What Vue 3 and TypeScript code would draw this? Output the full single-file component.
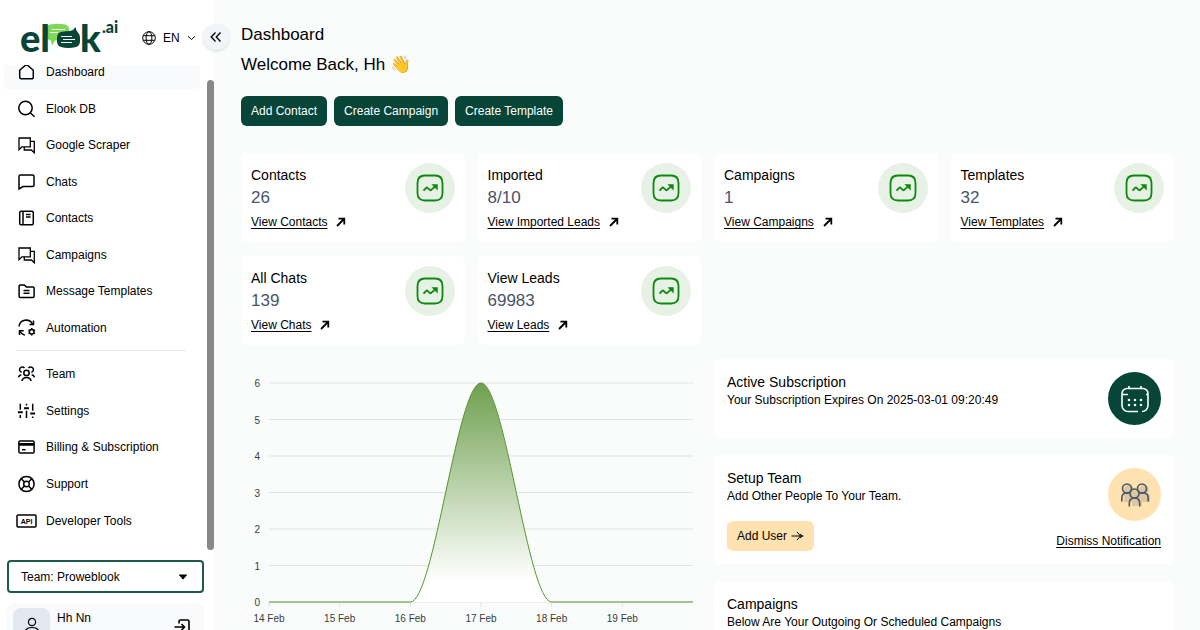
<script setup lang="ts">
interface NavItem {
  label: string
  icon: string
  active?: boolean
}

interface Stat {
  label: string
  value: string
  link: string
}

const icons: Record<string, string[]> = {
  home: ['M2.7 8.3 8.2 3.5a2 2 0 0 1 2.6 0l5.5 4.8v7a1.5 1.5 0 0 1-1.5 1.5H4.2a1.5 1.5 0 0 1-1.5-1.5z'],
  search: ['M15.2 9A6.7 6.7 0 1 1 1.8 9a6.7 6.7 0 0 1 13.4 0z', 'M13.2 13.8l4.3 4'],
  forum: ['M2 14.6V3h11.3v8.8H4.9z', 'M13.3 6.3h4v11.5l-2.9-2.8H7.3v-3.2'],
  chat: ['M2 17V4.5A1.5 1.5 0 0 1 3.5 3h12A1.5 1.5 0 0 1 17 4.5V13a1.5 1.5 0 0 1-1.5 1.5H6z'],
  book: [
    'M4.2 3.2h10.6a1.5 1.5 0 0 1 1.5 1.5v10.6a1.5 1.5 0 0 1-1.5 1.5H4.2a1.5 1.5 0 0 1-1.5-1.5V4.7a1.5 1.5 0 0 1 1.5-1.5z',
    'M6 3.2v13.6',
    'M9 6.4h4.6M9 9h4.6',
  ],
  folder: [
    'M3.3 4h4l2 1.9h6.6a1.2 1.2 0 0 1 1.2 1.2v8.2a1.2 1.2 0 0 1-1.2 1.2H3.3a1.2 1.2 0 0 1-1.2-1.2V5.2A1.2 1.2 0 0 1 3.3 4z',
    'M6.5 9.6h6M6.5 12.2h6',
  ],
  automation: [
    'M2 8.5A7.2 7.2 0 0 1 15.4 5.8',
    'M16.5 2.6v4h-4',
    'M7.8 17.2A7.5 7.5 0 0 1 3 13.2',
    'M2.5 17v-4.2h4.2',
    'M17 13.7a2.3 2.3 0 1 1-4.6 0 2.3 2.3 0 0 1 4.6 0z',
    'M14.7 10v1.4M14.7 16v1.4M11.5 11.9l1.2.7M16.7 14.9l1.2.7M11.5 15.5l1.2-.7M16.7 12.5l1.2-.7',
  ],
  team: [
    'M12.2 8.9a2.7 2.7 0 1 1-5.4 0 2.7 2.7 0 0 1 5.4 0z',
    'M4.8 17c.7-2.3 2.4-3.5 4.7-3.5s4 1.2 4.7 3.5',
    'M4.7 8.3A2.7 2.7 0 1 1 7.5 4.1M14.3 8.3a2.7 2.7 0 1 0-2.8-4.2',
    'M1.5 13.3c.3-1.4 1.3-2.3 2.8-2.6M17.5 13.3c-.3-1.4-1.3-2.3-2.8-2.6',
  ],
  sliders: [
    'M3.3 2.8v6M3.3 14v3M9.5 2.8v1.6M9.5 9.8V17M15.7 2.8v7M15.7 15.6V17',
    'M.9 11.2h4.8M7.1 7.2h4.8M13.3 12.6h4.8',
  ],
  card: [
    'M3.2 4h12.6a1.3 1.3 0 0 1 1.3 1.3v9.4a1.3 1.3 0 0 1-1.3 1.3H3.2a1.3 1.3 0 0 1-1.3-1.3V5.3A1.3 1.3 0 0 1 3.2 4z',
    'M2 6.8h15M2 8h15',
    'M5 12.7h3.5',
  ],
  support: [
    'M17.1 10a7.6 7.6 0 1 1-15.2 0 7.6 7.6 0 0 1 15.2 0z',
    'M12.3 10a2.8 2.8 0 1 1-5.6 0 2.8 2.8 0 0 1 5.6 0z',
    'M4.2 4.7l3.3 3.3M14.8 4.7L11.5 8M4.2 15.3L7.5 12M14.8 15.3L11.5 12',
  ],
  api: ['M1 4h17a1 1 0 0 1 1 1v10a1 1 0 0 1-1 1H1a1 1 0 0 1-1-1V5a1 1 0 0 1 1-1z'],
}

const groups: NavItem[][] = [
  [
    { label: 'Dashboard', icon: 'home', active: true },
    { label: 'Elook DB', icon: 'search' },
    { label: 'Google Scraper', icon: 'forum' },
    { label: 'Chats', icon: 'chat' },
    { label: 'Contacts', icon: 'book' },
    { label: 'Campaigns', icon: 'forum' },
    { label: 'Message Templates', icon: 'folder' },
    { label: 'Automation', icon: 'automation' },
  ],
  [
    { label: 'Team', icon: 'team' },
    { label: 'Settings', icon: 'sliders' },
    { label: 'Billing & Subscription', icon: 'card' },
    { label: 'Support', icon: 'support' },
    { label: 'Developer Tools', icon: 'api' },
  ],
]

const actions = ['Add Contact', 'Create Campaign', 'Create Template']

const stats: Stat[] = [
  { label: 'Contacts', value: '26', link: 'View Contacts' },
  { label: 'Imported', value: '8/10', link: 'View Imported Leads' },
  { label: 'Campaigns', value: '1', link: 'View Campaigns' },
  { label: 'Templates', value: '32', link: 'View Templates' },
  { label: 'All Chats', value: '139', link: 'View Chats' },
  { label: 'View Leads', value: '69983', link: 'View Leads' },
]

const days = ['14 Feb', '15 Feb', '16 Feb', '17 Feb', '18 Feb', '19 Feb']
const messages = [0, 0, 0, 6, 0, 0, 0]

const plot = { left: 28, right: 452, top: 24, bottom: 243 }
const maxValue = 6
const step = (plot.right - plot.left) / (messages.length - 1)
const px = (i: number) => plot.left + i * step
const py = (v: number) => plot.bottom - (v / maxValue) * (plot.bottom - plot.top)

const line = messages
  .map((v, i) => {
    if (i === 0) return `M${px(0)} ${py(v)}`
    const third = step / 3
    return `C${px(i - 1) + third} ${py(messages[i - 1])} ${px(i) - third} ${py(v)} ${px(i)} ${py(v)}`
  })
  .join(' ')
const area = `${line} V${plot.bottom} H${plot.left} Z`
const ticks = [0, 1, 2, 3, 4, 5, 6]
</script>

<template>
  <div class="app">
    <aside class="sidebar">
      <header class="brand">
        <svg class="logo" viewBox="20 20 100 36" role="img" aria-label="elook.ai">
          <path fill="#7ed957" d="M50 24.5q8-1.5 15 0 4 1 4.5 6v6q0 4-4 4H55l-3 5q-1-3-1-5-5-1-5-6v-4q0-5 4-6z" />
          <path stroke="#fff" stroke-width="1" d="M52 29.5h13M50 32.5h8" />
          <path fill="#064538" d="M75.5 27q.5 3 2 5 2.5 2 2.5 5v4q0 5-4 6-8 2-15 0-4-1-4-6v-3q0-5 4-6 5-1 9-1 4-1 5.500-4z" />
          <path stroke="#fff" stroke-width="1" d="M61 36.5h11M63 39.5h12M61 42.5h11" />
          <g class="word">
            <text x="20" y="52">el</text>
            <text x="80" y="52">k</text>
          </g>
          <text class="suffix" x="102" y="33">.ai</text>
        </svg>
        <button class="lang" type="button">
          <svg class="globe" viewBox="0 0 14 14" aria-hidden="true">
            <circle cx="7" cy="7" r="6.3" />
            <ellipse cx="7" cy="7" rx="2.9" ry="6.3" />
            <path d="M1.3 4.7h11.4M1.3 9.3h11.4" />
          </svg>
          <span>EN</span>
          <svg class="caret" viewBox="0 0 9 6" aria-hidden="true"><path d="M1 1.2l3.5 3.3L8 1.2" /></svg>
        </button>
      </header>
      <button class="collapse" type="button" aria-label="Collapse sidebar">
        <svg viewBox="0 0 12 12" aria-hidden="true"><path d="M5.5 1.5L1.2 6l4.3 4.5M10.5 1.5L6.2 6l4.3 4.5" /></svg>
      </button>

      <div class="scroll">
        <nav class="nav">
          <ul v-for="(group, g) in groups" :key="g" :class="['group', g === 0 ? 'main-group' : 'tool-group']">
            <li v-for="item in group" :key="item.label">
              <a href="#" :class="{ active: item.active }">
                <svg :class="['icon', item.icon]" viewBox="0 0 20 20" aria-hidden="true">
                  <path v-for="d in icons[item.icon]" :key="d" :d="d" />
                  <text v-if="item.icon === 'api'" x="9.5" y="12.7" text-anchor="middle">API</text>
                </svg>
                <span>{{ item.label }}</span>
              </a>
            </li>
          </ul>
        </nav>
        <div class="thumb"></div>
      </div>

      <footer class="account">
        <label class="team">
          <select aria-label="Team">
            <option>Team: Proweblook</option>
          </select>
          <svg viewBox="0 0 10 6" aria-hidden="true"><path d="M1.5.5h7q.8 0 .3.7L5.6 5q-.6.6-1.200 0L1.200 1.200Q.7.5 1.500.5z" /></svg>
        </label>
        <div class="user">
          <span class="avatar">
            <svg viewBox="0 0 16 20" aria-hidden="true">
              <circle cx="8" cy="5" r="3.6" />
              <path d="M1 16c0-4 3-5.500 7-5.500s7 1.500 7 5.500" />
            </svg>
          </span>
          <span class="name">Hh Nn</span>
          <button class="logout" type="button" aria-label="Log out">
            <svg viewBox="0 0 16 16" aria-hidden="true">
              <path d="M5 4.5v-2A1.5 1.5 0 0 1 6.5 1h7A1.5 1.5 0 0 1 15 2.5v11a1.5 1.5 0 0 1-1.5 1.5h-7A1.5 1.5 0 0 1 5 13.5v-2M.5 8h10M7.500 5l3 3-3 3" />
            </svg>
          </button>
        </div>
      </footer>
    </aside>

    <main class="content">
      <h1>Dashboard</h1>
      <p class="welcome">Welcome Back, Hh 👋</p>
      <div class="actions">
        <button v-for="a in actions" :key="a" type="button">{{ a }}</button>
      </div>

      <section class="stats">
        <article v-for="s in stats" :key="s.label" class="stat">
          <div>
            <h2>{{ s.label }}</h2>
            <p class="value">{{ s.value }}</p>
            <p class="more">
              <a href="#">{{ s.link }}</a>
              <svg viewBox="0 0 10 10" aria-hidden="true"><path d="M1 9l7-7M2.5 1.7h5.8v5.8" /></svg>
            </p>
          </div>
          <span class="trend">
            <svg viewBox="0 0 28 28" aria-hidden="true">
              <path d="M14 1.5h5q7.500 0 7.500 7.500v10q0 7.500-7.500 7.500H9q-7.500 0-7.500-7.500V9q0-7.500 7.500-7.500z" />
              <path d="M7.500 16.700l2.700-2.900q.7-.7 1.400 0l2.200 2.100q.7.700 1.400 0l5-4.500" />
              <path fill="currentColor" d="M17.600 11.200h3.200v3.200z" />
            </svg>
          </span>
        </article>
      </section>

      <section class="lower">
        <svg class="chart" viewBox="0 0 460 271" role="img" aria-label="Messages per day">
          <defs>
            <linearGradient id="fade" x1="0" y1="0" x2="0" y2="1">
              <stop offset="0" stop-color="#6fa04f" />
              <stop offset="0.9" stop-color="#ffffff" />
            </linearGradient>
          </defs>
          <g class="grid">
            <path v-for="t in ticks" :key="t" :d="`M${plot.left} ${py(t)}H${plot.right}`" />
            <path v-for="(d, i) in days" :key="d" :d="`M${px(i)} ${plot.bottom}v5`" />
          </g>
          <path :d="area" fill="url(#fade)" />
          <path class="line" :d="line" />
          <g class="labels">
            <text v-for="t in ticks" :key="t" x="19" :y="py(t) + 4" text-anchor="end">{{ t }}</text>
            <text v-for="(d, i) in days" :key="d" :x="px(i)" y="263" text-anchor="middle">{{ d }}</text>
          </g>
        </svg>

        <div class="panels">
          <article class="panel">
            <div class="top">
              <div>
                <h2>Active Subscription</h2>
                <p>Your Subscription Expires On 2025-03-01 09:20:49</p>
              </div>
              <span class="badge green">
                <svg viewBox="0 0 28 28" aria-hidden="true">
                  <path d="M17 26.500H7a6 6 0 0 1-6-6V8.500a5 5 0 0 1 5-5h16a5 5 0 0 1 5 5v12a6 6 0 0 1-6 6M8 1v3M20 1v3M1 9.500h6M25 9.500h2" />
                  <path class="dots" d="M8 15h.01M14 15h.01M20 15h.01M8 20h.01M14 20h.01M20 20h.01" />
                </svg>
              </span>
            </div>
          </article>

          <article class="panel">
            <div class="top">
              <div>
                <h2>Setup Team</h2>
                <p>Add Other People To Your Team.</p>
              </div>
              <span class="badge sand">
                <svg viewBox="0 0 28 24" aria-hidden="true">
                  <g class="shade">
                    <circle cx="8" cy="7" r="5" /><circle cx="23" cy="7" r="5" /><circle cx="16" cy="12" r="5" />
                    <path d="M3 19v-5q0-4 4-4h18q4 0 4 4v5h-8v4H11v-4z" />
                  </g>
                  <circle cx="6" cy="5.500" r="4.500" />
                  <circle cx="21" cy="5.500" r="4.500" />
                  <circle cx="13.500" cy="10.500" r="4.500" />
                  <path d="M.8 18.500V15q0-5 5-5h2M27.200 18.500V15q0-5-5-5h-3M8.300 23.500v-3q0-5.500 5.200-5.500t5.200 5.500v3" />
                </svg>
              </span>
            </div>
            <div class="bottom">
              <button class="add" type="button">
                <span>Add User</span>
                <svg viewBox="0 0 13 10" aria-hidden="true"><path d="M.5 5h12M6 1l3.500 4L6 9M9 3l2.500 2L9 7" /></svg>
              </button>
              <a href="#">Dismiss Notification</a>
            </div>
          </article>

          <article class="panel">
            <h2>Campaigns</h2>
            <p>Below Are Your Outgoing Or Scheduled Campaigns</p>
          </article>
        </div>
      </section>
    </main>
  </div>
</template>

<style>
body {
  margin: 0;
  overflow: hidden;
}
</style>

<style scoped>
.app {
  display: flex;
  height: 100vh;
  overflow: hidden;
  background: #fafcfb;
  color: #000;
  font: 12px/20px "Liberation Sans", Arial, sans-serif;
}
h1, h2, p, ul {
  margin: 0;
  padding: 0;
  font-weight: 400;
  list-style: none;
}
a {
  color: inherit;
}
button, select {
  border: 0;
  font: inherit;
  color: inherit;
  cursor: pointer;
}
svg {
  display: block;
  flex: none;
  fill: none;
  stroke: currentColor;
  overflow: visible;
}

.sidebar {
  position: relative;
  flex: 0 0 214px;
  background: #fff;
}
.brand {
  display: flex;
  align-items: center;
  gap: 22px;
  height: 65px;
  box-sizing: border-box;
  padding: 10px 0 0 20px;
}
.logo {
  width: 100px;
  height: 36px;
  stroke: none;
}
.word {
  fill: #064538;
  font: 900 38px Lato, sans-serif;
}
.suffix {
  fill: #064538;
  font: 900 16px Lato, sans-serif;
}
.lang {
  display: flex;
  align-items: center;
  gap: 7px;
  padding: 0;
  background: none;
}
.globe {
  width: 14px;
  height: 14px;
}
.caret {
  width: 9px;
  height: 6px;
}
.collapse {
  position: absolute;
  top: 24px;
  right: -15px;
  display: grid;
  place-items: center;
  width: 26px;
  height: 26px;
  padding: 0;
  border-radius: 50%;
  background: #f1f5f9;
  box-shadow: 0 1px 3px rgba(0, 0, 0, 0.15);
}
.collapse svg {
  width: 12px;
  height: 12px;
  stroke-width: 1.3;
}

.scroll {
  display: flex;
  height: calc(100vh - 145px);
  overflow: hidden;
}
.nav {
  flex: 1;
  padding: 0 7px 0 4px;
}
.group {
  display: grid;
  grid-auto-rows: 1fr;
  gap: 4px;
}
.main-group {
  height: 288px;
  margin-top: -9px;
}
.tool-group {
  position: relative;
  height: 179px;
  margin-top: 6px;
  padding-top: 8px;
}
.tool-group::before {
  content: "";
  position: absolute;
  top: 0;
  left: 12px;
  right: 14px;
  border-top: 1px solid #e5e7eb;
}
.nav a {
  display: flex;
  align-items: center;
  gap: 9px;
  height: 100%;
  padding-left: 13px;
  border-radius: 4px;
  text-decoration: none;
}
.nav a.active {
  background: #f8fafc;
}
.icon {
  width: 20px;
  height: 20px;
  stroke-width: 1.5;
}
.icon.forum {
  stroke-width: 1.3;
}
.icon.sliders path:last-child {
  stroke-width: 2;
}
.icon text {
  fill: currentColor;
  stroke: none;
  font: bold 7px "Liberation Sans", Arial, sans-serif;
}
.thumb {
  width: 7px;
  margin-top: 15px;
  border-radius: 4px;
  background: #888;
}

.account {
  padding: 10px 10px 0 7px;
}
.team {
  position: relative;
  display: block;
}
.team select {
  display: block;
  width: 100%;
  height: 33px;
  padding: 0 12px;
  border: 2px solid #1b5b4b;
  border-radius: 4px;
  background: #fff;
  appearance: none;
}
.team svg {
  position: absolute;
  top: 14px;
  right: 16px;
  width: 10px;
  height: 6px;
  fill: #000;
  stroke: none;
  pointer-events: none;
}
.user {
  display: flex;
  gap: 7px;
  margin-top: 10px;
  padding: 5px 14px 5px 6px;
  border-radius: 8px;
  background: #f8fafc;
}
.avatar {
  display: grid;
  place-items: center;
  width: 37px;
  height: 37px;
  border-radius: 8px;
  background: #e2e8f0;
}
.avatar svg {
  width: 16px;
  height: 20px;
  stroke-width: 1.2;
}
.name {
  flex: 1;
}
.logout {
  align-self: center;
  padding: 0;
  background: none;
}
.logout svg {
  width: 16px;
  height: 16px;
  stroke-width: 1.6;
}

.content {
  flex: 1;
  min-width: 0;
  padding: 20px 26px 0 27px;
}
h1, .welcome {
  font-size: 17px;
  line-height: 30px;
}
.actions {
  display: flex;
  gap: 7px;
  margin: 16px 0 27px;
}
.actions button {
  height: 30px;
  padding: 0 10px;
  border-radius: 6px;
  background: #064538;
  color: #fff;
}
.stats {
  display: grid;
  grid-template-columns: repeat(4, 1fr);
  gap: 14px 13px;
}
.stat {
  display: flex;
  justify-content: space-between;
  padding: 10px;
  border-radius: 6px;
  background: #fff;
}
.stat h2 {
  font-size: 14px;
  line-height: 24px;
}
.value {
  color: #475569;
  font-size: 17px;
  line-height: 22px;
}
.more {
  display: flex;
  align-items: center;
  gap: 9px;
  margin-top: 3px;
}
.more a, .bottom a {
  text-underline-offset: 2px;
}
.more svg {
  width: 10px;
  height: 10px;
  stroke-width: 1.8;
}
.trend {
  display: grid;
  place-items: center;
  width: 50px;
  height: 50px;
  border-radius: 50%;
  background: #e7f1e6;
  color: #0b8a0b;
}
.trend svg {
  width: 28px;
  height: 28px;
  stroke-width: 1.8;
}

.lower {
  display: grid;
  grid-template-columns: 1fr 1fr;
  gap: 13px;
  align-items: start;
  margin-top: 14px;
}
.chart {
  width: 100%;
}
.grid {
  stroke: #e0e3e3;
}
.line {
  stroke: #5a962f;
}
.labels {
  fill: #373d3f;
  stroke: none;
  font-size: 10px;
}
.chart > path:not(.line) {
  stroke: none;
}
.panels {
  display: grid;
  gap: 17px;
}
.panel {
  padding: 13px;
  border-radius: 6px;
  background: #fff;
}
.panel h2 {
  font-size: 14px;
  line-height: 20px;
}
.panel p {
  line-height: 16px;
}
.top, .bottom {
  display: flex;
  justify-content: space-between;
}
.bottom {
  align-items: flex-end;
}
.badge {
  display: grid;
  place-items: center;
  width: 53px;
  height: 53px;
  border-radius: 50%;
}
.badge svg {
  width: 28px;
  height: 28px;
  stroke-width: 1.6;
}
.green {
  background: #064538;
  color: #fff;
}
.dots {
  stroke-width: 2.6;
  stroke-linecap: round;
}
.sand {
  background: #ffe2b0;
  color: #475569;
}
.shade {
  fill: #dcc7a1;
  stroke: none;
}
.add {
  display: flex;
  align-items: center;
  gap: 4px;
  height: 30px;
  padding: 0 10px;
  border-radius: 6px;
  background: #ffe2b0;
}
.add svg {
  width: 13px;
  height: 10px;
}
</style>
